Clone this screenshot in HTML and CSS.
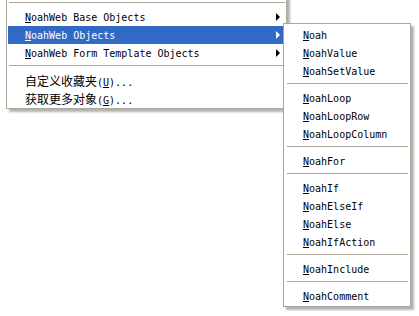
FILE: index.html
```html
<!DOCTYPE html>
<html lang="zh-CN">
<head>
    <meta charset="UTF-8">
    <title>NoahWeb 菜单</title>
    <link rel="stylesheet" href="styles.css">
</head>
<body>
    <div class="stage">
        <div class="menu main-menu">
            <div class="sep"></div>
            <div class="item"><span class="label"><u>N</u>oahWeb Base Objects</span><span class="arrow"></span></div>
            <div class="item active"><span class="label"><u>N</u>oahWeb Objects</span><span class="arrow"></span></div>
            <div class="item"><span class="label"><u>N</u>oahWeb Form Template Objects</span><span class="arrow"></span></div>
            <div class="sep"></div>
            <div class="item"><span class="label"><span class="zh">自定义收藏夹</span>(<u>U</u>)...</span></div>
            <div class="item"><span class="label"><span class="zh">获取更多对象</span>(<u>G</u>)...</span></div>
        </div>

        <div class="menu sub-menu">
            <div class="item"><span class="label"><u>N</u>oah</span></div>
            <div class="item"><span class="label"><u>N</u>oahValue</span></div>
            <div class="item"><span class="label"><u>N</u>oahSetValue</span></div>
            <div class="sep"></div>
            <div class="item"><span class="label"><u>N</u>oahLoop</span></div>
            <div class="item"><span class="label"><u>N</u>oahLoopRow</span></div>
            <div class="item"><span class="label"><u>N</u>oahLoopColumn</span></div>
            <div class="sep"></div>
            <div class="item"><span class="label"><u>N</u>oahFor</span></div>
            <div class="sep"></div>
            <div class="item"><span class="label"><u>N</u>oahIf</span></div>
            <div class="item"><span class="label"><u>N</u>oahElseIf</span></div>
            <div class="item"><span class="label"><u>N</u>oahElse</span></div>
            <div class="item"><span class="label"><u>N</u>oahIfAction</span></div>
            <div class="sep"></div>
            <div class="item"><span class="label"><u>N</u>oahInclude</span></div>
            <div class="sep"></div>
            <div class="item"><span class="label"><u>N</u>oahComment</span></div>
        </div>
    </div>
</body>
</html>
```

FILE: styles.css
```css
* {
    margin: 0;
    padding: 0;
    box-sizing: border-box;
}

body {
    background: #ffffff;
    font-family: "DejaVu Sans Mono", "Liberation Mono", monospace;
    font-size: 10px;
    color: #000000;
    overflow: hidden;
}

.stage {
    position: relative;
    display: flow-root;
    height: 316px;
}

.menu {
    background: #ffffff;
    border: 1px solid #aca899;
    box-shadow: 3px 3px 2px rgba(0, 0, 0, 0.3);
}

.main-menu {
    width: 281px;
    margin: -4px 0 0 6px;
    padding: 2px 1px 1px 1px;
}

.sub-menu {
    position: absolute;
    left: 283px;
    top: 23px;
    width: 128px;
    padding: 2px 2px 1px 2px;
}

.item {
    display: flex;
    align-items: center;
    height: 18px;
    padding-left: 17px;
    white-space: nowrap;
}

.item.active {
    background: #316ac5;
    color: #ffffff;
}

.item u {
    text-underline-offset: 1px;
}

.zh {
    font-family: "Noto Sans CJK SC", sans-serif;
    font-size: 12px;
}

.arrow {
    margin-left: auto;
    margin-right: 5px;
    width: 0;
    height: 0;
    border-left: 4px solid #000000;
    border-top: 4px solid transparent;
    border-bottom: 4px solid transparent;
}

.item.active .arrow {
    border-left-color: #ffffff;
}

.sep {
    height: 9px;
    padding-top: 3px;
    margin-left: 1px;
}

.sep::before {
    content: "";
    display: block;
    height: 1px;
    background: #aca899;
}
```
